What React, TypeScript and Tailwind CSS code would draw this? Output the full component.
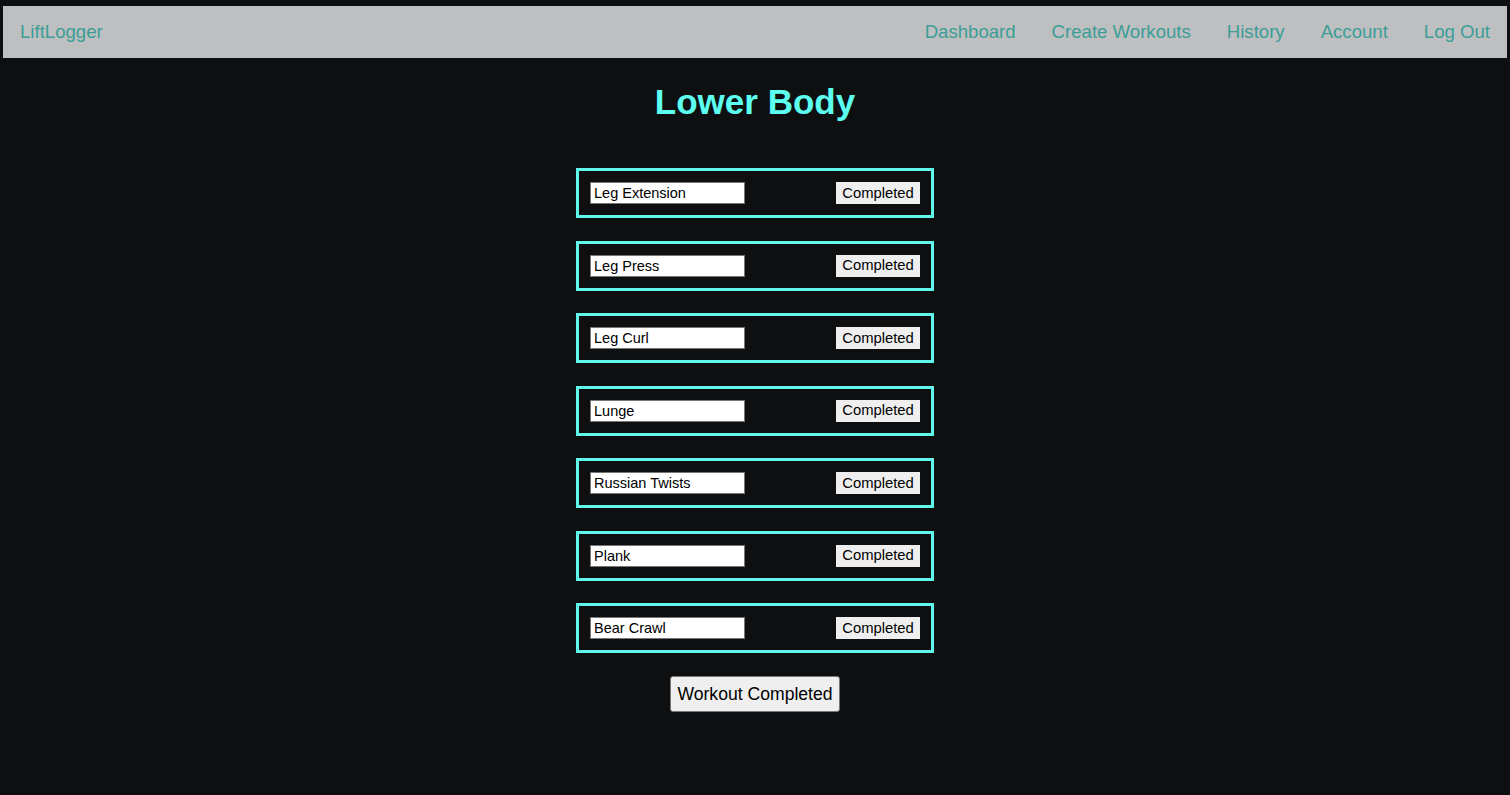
const exercises = ['Leg Extension', 'Leg Press', 'Leg Curl', 'Lunge', 'Russian Twists', 'Plank', 'Bear Crawl'];

const links = ['Dashboard', 'Create Workouts', 'History', 'Account', 'Log Out'];

function ExerciseRow({ name }: { name: string }) {
  return (
    <div className="flex items-center justify-between border-[3px] border-[#5ef7ea] p-[11px]">
      <input
        type="text"
        defaultValue={name}
        className="w-[155px] h-[22px] bg-white border border-[#767676] px-[3px] text-[14.5px] text-black outline-none"
      />
      <button className="w-[84px] h-[22px] bg-[#efefef] text-[14.8px] text-black leading-none">Completed</button>
    </div>
  );
}

export default function App() {
  return (
    <div className="min-h-[795px] bg-[#0e0f11] pt-[6px] font-['Liberation_Sans',Arial,sans-serif]">
      <nav className="mx-[3px] h-[52px] bg-[#bebfc0] flex items-center justify-between px-[17px] text-[18.6px] text-[#3b9e97]">
        <a href="#">LiftLogger</a>
        <div className="flex gap-[36px]">
          {links.map((l) => (
            <a key={l} href="#">{l}</a>
          ))}
        </div>
      </nav>

      <h1 className="mt-[24px] mb-[46px] text-center text-[35px] leading-[40px] font-bold text-[#5cfff0]">Lower Body</h1>

      <div className="w-[358px] mx-auto flex flex-col gap-[22.5px]">
        {exercises.map((e) => (
          <ExerciseRow key={e} name={e} />
        ))}
      </div>

      <div className="flex justify-center mt-[23px]">
        <button className="w-[170px] h-[36px] bg-[#efefef] border border-[#767676] rounded-[3px] text-[17.6px] text-black">
          Workout Completed
        </button>
      </div>
    </div>
  );
}
